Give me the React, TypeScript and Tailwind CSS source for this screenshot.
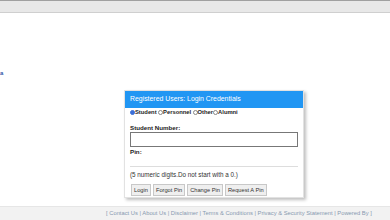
import React from "react";

function Radio({ on }: { on?: boolean }) {
  return (
    <span
      className={
        "inline-block w-[5px] h-[5px] rounded-full border-[1px] " +
        (on ? "border-[#3b6fd8] bg-[#3b6fd8]" : "border-[#888] bg-white")
      }
    />
  );
}

function Btn({ label }: { label: string }) {
  return (
    <div className="h-[12px] px-[2px] flex items-center whitespace-nowrap bg-[#efefef] border border-[#c8c8c8] text-[5.7px] text-[#333]">
      {label}
    </div>
  );
}

export default function App() {
  return (
    <div
      className="w-[390px] h-[220px] bg-white overflow-hidden flex flex-col"
      style={{ fontFamily: '"Liberation Sans", Arial, sans-serif' }}
    >
      <div className="h-[13px] shrink-0 bg-[#e8e8e8] border-t border-[#a0a0a0] border-b border-b-[#cfcfcf]" />
      <div className="h-[63px] shrink-0 flex items-end">
        <span className="text-[6px] leading-[6px] text-[#3356a8] font-bold">a</span>
      </div>
      <div className="h-[14px] shrink-0" />
      <div className="ml-[124px] w-[180px] h-[108px] shrink-0 bg-white border border-[#e2e2e2] shadow-[2px_2px_3px_rgba(0,0,0,0.25)] flex flex-col">
        <div className="h-[17px] bg-[#2196f3] text-white text-[6.9px] pl-[5px] flex items-center whitespace-nowrap">
          Registered Users: Login Credentials
        </div>
        <div className="px-[5px] flex flex-col">
          <div className="h-[8px] flex items-center text-[5.8px] font-bold text-[#222] whitespace-nowrap">
            <Radio on />
            <span>Student</span>
            <span className="w-[1.5px]" />
            <Radio />
            <span>Personnel</span>
            <span className="w-[1.5px]" />
            <Radio />
            <span>Other</span>
            <Radio />
            <span>Alumni</span>
          </div>
          <div className="mt-[8px] text-[6.2px] leading-[8px] font-bold text-[#222]">Student Number:</div>
          <div className="h-[15px] border-[1.5px] border-[#777]" />
          <div className="mt-[1px] text-[6.2px] leading-[8px] font-bold text-[#222]">Pin:</div>
          <div className="mt-[10px] border-t border-[#ddd]" />
          <div className="mt-[4px] text-[6.3px] leading-[8px] text-[#333] whitespace-nowrap">(5 numeric digits.Do not start with a 0.)</div>
          <div className="mt-[5px] flex gap-[2px] ml-[1px]">
            <Btn label="Login" />
            <Btn label="Forgot Pin" />
            <Btn label="Change Pin" />
            <Btn label="Request A Pin" />
          </div>
        </div>
      </div>
      <div className="flex-1 mt-[8px] bg-[#f2f2f2] border-t border-[#e6e6e6] flex items-center pl-[106px]">
        <span className="text-[5.8px] text-[#8899b0] whitespace-nowrap">
          [ Contact Us | About Us | Disclaimer | Terms &amp; Conditions | Privacy &amp; Security Statement | Powered By ]
        </span>
      </div>
    </div>
  );
}
